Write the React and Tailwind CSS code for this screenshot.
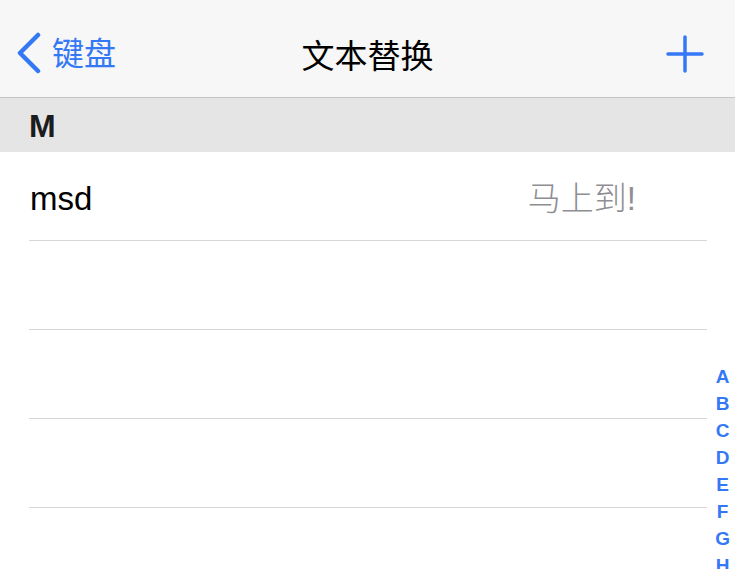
import React from "react";

const font = { fontFamily: '"Liberation Sans", "Noto Sans CJK SC", sans-serif' };
const letters = ["A", "B", "C", "D", "E", "F", "G", "H", "I"];

const Row = ({ left, right }) => (
  <div className="h-[89px] flex flex-col">
    <div className="flex-1 flex items-center justify-between pl-[30px] pr-[99px] pt-[6px]">
      <span className="text-[33px] text-black">{left}</span>
      <span className="text-[33px] font-light text-[#8e8e93]">{right}</span>
    </div>
    <div className="h-px bg-[#d6d6d9] ml-[29px] mr-[28px]" />
  </div>
);

export default function App() {
  return (
    <div className="relative w-[735px] h-[569px] overflow-hidden bg-white" style={font}>
      <div className="h-[98px] bg-[#f7f7f7] border-b border-[#c4c4c6] flex items-center justify-between px-[16px] pt-[11px]">
        <div className="flex items-center gap-[10px]">
          <svg width="26" height="42" viewBox="0 0 26 42" className="-mt-[2px]">
            <path d="M22 3 L4 21 L22 39" fill="none" stroke="#3478f6" strokeWidth="4.5" strokeLinecap="round" strokeLinejoin="round" />
          </svg>
          <span className="text-[32px] text-[#3478f6]">键盘</span>
        </div>
        <span className="text-[33px] text-black absolute left-1/2 -translate-x-1/2 top-[32px]">文本替换</span>
        <svg width="38" height="38" viewBox="0 0 38 38" className="mr-[15px]">
          <path d="M19 2 V36 M2 19 H36" fill="none" stroke="#3478f6" strokeWidth="3.5" strokeLinecap="round" />
        </svg>
      </div>
      <div className="h-[54px] bg-[#e5e5e6] flex items-center pl-[29px] pt-[2px]">
        <span className="text-[32px] font-bold text-[#1c1c1e]">M</span>
      </div>
      <Row left="msd" right="马上到!" />
      <Row left="" right="" />
      <Row left="" right="" />
      <Row left="" right="" />
      <div className="absolute right-[5px] top-[363px] flex flex-col items-center">
        {letters.map((l) => (
          <span key={l} className="text-[19px] font-bold leading-[27px] text-[#3478f6]">
            {l}
          </span>
        ))}
      </div>
    </div>
  );
}
